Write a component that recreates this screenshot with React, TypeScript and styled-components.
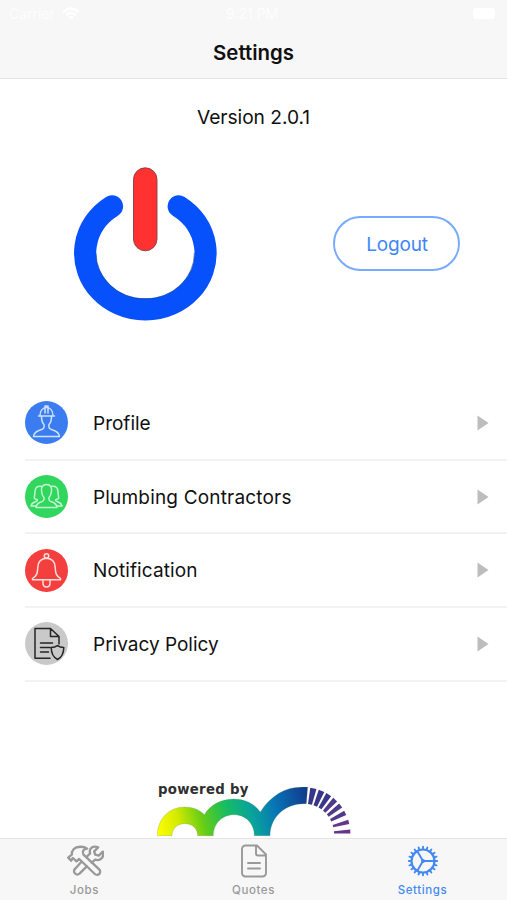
import React from "react";
import styled, { createGlobalStyle } from "styled-components";

const GlobalStyle = createGlobalStyle`
  * { box-sizing: border-box; }
  body { margin: 0; background: #fff; }
`;

const Screen = styled.div`
  width: 507px;
  height: 900px;
  display: flex;
  flex-direction: column;
  overflow: hidden;
  background: #fff;
  color: #101010;
  font-family: Inter, "Liberation Sans", sans-serif;
`;

const Header = styled.header`
  flex: none;
  height: 79px;
  background: #f7f7f7;
  border-bottom: 1px solid #e2e2e2;
`;

const StatusBar = styled.div`
  height: 27px;
  padding: 0 12px 0 9px;
  display: grid;
  grid-template-columns: 1fr auto 1fr;
  align-items: center;
  color: #fdfdfd;
  font-size: 14px;
`;

const Carrier = styled.span`
  display: flex;
  align-items: center;
  gap: 7px;
`;

const Battery = styled.span`
  justify-self: end;
  width: 22px;
  height: 11px;
  border-radius: 3px;
  background: #fff;
`;

const Title = styled.h1`
  margin: 0;
  height: 51px;
  text-align: center;
  font-size: 20.4px;
  line-height: 51px;
  font-weight: 600;
  letter-spacing: 0;
`;

const Content = styled.main`
  flex: 1;
  min-height: 0;
  overflow: hidden;
`;

const Version = styled.p`
  margin: 0;
  padding-top: 25px;
  text-align: center;
  font-size: 19.2px;
  line-height: 26px;
  letter-spacing: -0.05px;
`;

const Hero = styled.section`
  height: 257px;
  padding: 36px 47px 0 72px;
  display: flex;
  justify-content: space-between;
  align-items: flex-start;
`;

const LogoutButton = styled.button`
  width: 127px;
  height: 55px;
  margin-top: 50px;
  padding: 2px 0 0 1px;
  border: 2px solid #78abff;
  border-radius: 28px;
  background: #fff;
  color: #3e86f8;
  font: inherit;
  font-size: 19px;
  letter-spacing: -0.2px;
`;

const List = styled.ul`
  margin: 0;
  padding: 0 0 0 25px;
  list-style: none;
`;

const Row = styled.li`
  height: 73.7px;
  padding-right: 18px;
  display: flex;
  align-items: center;
  border-bottom: 2px solid #f2f2f2;
`;

const Badge = styled.svg<{ $color: string }>`
  width: 43px;
  height: 43px;
  flex: none;
  border-radius: 50%;
  background: ${(p) => p.$color};
  fill: none;
  stroke-width: 1.5;
  stroke-linecap: round;
  stroke-linejoin: round;
`;

const RowLabel = styled.span<{ $tracking: number }>`
  flex: 1;
  margin-left: 25px;
  padding-top: 1.5px;
  font-size: 19px;
  letter-spacing: ${(p) => p.$tracking}px;
`;

const Arrow = styled.svg`
  width: 12px;
  height: 16px;
  fill: #bdbdbd;
`;

const Brand = styled.footer`
  width: 195px;
  margin: 99px 0 0 157px;
`;

const BrandText = styled.div`
  height: 17px;
  padding-left: 1px;
  font: bold 13.3px/17px "DejaVu Sans", sans-serif;
  letter-spacing: 0.28px;
  color: #303030;
  white-space: nowrap;
`;

const Arches = styled.svg`
  display: block;
  width: 195px;
  height: 50px;
  margin-top: -11px;
`;

const TabBar = styled.nav`
  flex: none;
  height: 62px;
  display: grid;
  grid-template-columns: repeat(3, 1fr);
  background: #f7f7f7;
  border-top: 1px solid #e4e4e4;
`;

const Tab = styled.div<{ $active?: boolean }>`
  padding-top: 3px;
  display: flex;
  flex-direction: column;
  align-items: center;
  color: ${(p) => (p.$active ? "#4389f3" : "#999")};
  font-size: 11.5px;
  line-height: 20px;
  font-weight: 500;
  letter-spacing: 0.6px;
  svg {
    width: 38px;
    height: 38px;
    fill: none;
    stroke: currentColor;
    stroke-width: 1.9;
    stroke-linejoin: round;
    stroke-linecap: round;
  }
`;

const TEETH = Array.from({ length: 20 }, (_, i) => i * 18);
const FAN = [12, 22.5, 32.5, 42.5, 52.5, 63, 75, 87];

const ProfileBadge = () => (
  <Badge $color="#3b7df0" viewBox="0 0 43 43" stroke="#cfe2ff">
    <path d="M13.5 15h16M15 15c0-5 2.500-8.500 6.500-8.500S28 10 28 15M20 12V5h3v7M16.500 15.500c0 4 1 6.500 2.500 8 .8 3-.5 4.500-3 5.200-4.500 1.200-7 3-7.500 6.800h26c-.5-3.800-3-5.600-7.500-6.800-2.500-.7-3.800-2.200-3-5.200 1.500-1.500 2.500-4 2.500-8" />
  </Badge>
);

const GroupBadge = () => (
  <Badge $color="#30d65d" viewBox="0 0 43 43" stroke="#c4f8d0">
    <path d="M21.500 9.500c-4 0-5.500 3-5 6.500.2 3 1 5 2.500 6.500.5 2.500-.5 3.600-2.500 4.300-3.500 1-5 2.700-5.500 5.700h21c-.5-3-2-4.700-5.500-5.700-2-.7-3-1.800-2.500-4.300 1.500-1.500 2.300-3.500 2.500-6.500.5-3.500-1-6.500-5-6.500Z" />
    <path d="M17 11.500c-5.500-1-7 2-7 5.500 0 3-1.200 5.500-.5 6.500 1 .8 2.500.8 3 1.500.5 2-6 1.500-6.500 6h5M26 11.500c5.500-1 7 2 7 5.500 0 3 1.200 5.500.5 6.500-1 .8-2.500.8-3 1.500-.5 2 6 1.500 6.500 6h-5" />
  </Badge>
);

const BellBadge = () => (
  <Badge $color="#f43f3f" viewBox="0 0 43 43" stroke="#ffe0de">
    <circle cx="21.500" cy="7" r="2.200" />
    <path d="M21.500 9.200c-6 .3-8.500 4-8.700 9-.3 6.300-.8 8.300-5.300 11.300v1.300h28v-1.300c-4.500-3-5-5-5.300-11.300-.2-5-2.700-8.700-8.700-9ZM18 31v4c.5 4 6.500 4 7 0v-4" />
  </Badge>
);

const PrivacyBadge = () => (
  <Badge $color="#c9c9c9" viewBox="0 0 43 43" stroke="#252525">
    <path d="M25 36.300H10V6.500h15.500l8.500 8V22M25.500 6.500v8H34M15.500 21h12M15.500 25.500h9.500M15.500 30h8M32.500 23.500c2.200 1.800 4 2 6.300 2-.1 6-1.500 9.500-6.300 12-4.800-2.500-6.200-6-6.300-12 2.300 0 4.100-.2 6.300-2Z" />
  </Badge>
);

const rows = [
  { label: "Profile", tracking: 0, icon: <ProfileBadge /> },
  { label: "Plumbing Contractors", tracking: 0.18, icon: <GroupBadge /> },
  { label: "Notification", tracking: 0.1, icon: <BellBadge /> },
  { label: "Privacy Policy", tracking: 0, icon: <PrivacyBadge /> },
];

const PowerIcon = () => (
  <svg width="147" height="157" viewBox="72 166 147 157" fill="none">
    <path d="M112 206.300A60.200 56.300 0 1 0 178.700 206.300" stroke="#0651fc" strokeWidth="22.200" strokeLinecap="round" />
    <path d="M96 253a49.200 46 0 0 0 98.400 0" stroke="#174181" strokeWidth=".6" />
    <rect x="133.500" y="167.800" width="23.500" height="83" rx="11.700" fill="#ff3131" stroke="#873e3e" strokeWidth=".9" />
  </svg>
);

const BrandMark = () => (
  <Arches viewBox="51 50 585 150">
    <defs>
      <linearGradient id="spectrum" gradientUnits="userSpaceOnUse" x1="52" y1="190" x2="503" y2="80">
        <stop offset="0" stopColor="#ffff00" />
        <stop offset=".15" stopColor="#d4ea00" />
        <stop offset=".31" stopColor="#63cc18" />
        <stop offset=".47" stopColor="#16bd61" />
        <stop offset=".62" stopColor="#08a49b" />
        <stop offset=".78" stopColor="#0875b6" />
        <stop offset="1" stopColor="#103b8d" />
      </linearGradient>
    </defs>
    <path
      d="M52 196C52 145 88 110 134 110C160 110 179 119 193 133C211 103 244 86 282 86C317 86 343 101 361 125C391 76 437 50 487 50H503L499 100C438 98 391 137 390 196H343C343 159 316 133 282 133C247 133 220 159 220 196H173C173 174 156 160 135 160C113 160 96 174 96 196Z"
      fill="url(#spectrum)"
      stroke="#697d56"
      strokeOpacity=".45"
      strokeWidth="1.500"
    />
    {FAN.map((angle, i) => (
      <path
        key={angle}
        d={`M${-6 + i * 0.4} -91L${-9.5 + i * 0.5} -140H${9.5 - i * 0.5}L${6 - i * 0.4} -91Z`}
        fill={i < 3 ? "#383689" : i < 6 ? "#51398c" : "#68348c"}
        transform={`translate(491 191) rotate(${angle})`}
      />
    ))}
  </Arches>
);

const ToolsIcon = () => (
  <svg viewBox="46.500 21 114 114">
    <g strokeWidth="7">
      <path d="M99 59L146 103A9 9 0 0 1 133 117L86 72L78 79L67 69L62 77L53 68L64 59C62 48 72 36 84 36C94 34 103 36 110 41C98 43 94 49 99 59Z" />
      <path d="M108 66L119 55C114 40 127 31 143 37L131 49L134 59L145 62L157 50C162 67 149 79 134 74L124 83" />
      <path d="M93 80L74 101A9 9 0 0 0 87 116L109 94" />
    </g>
  </svg>
);

const QuoteIcon = () => (
  <svg viewBox="0 0 38 38">
    <path d="M22 3.500H10.500A3.500 3.500 0 0 0 7 7v24a3.500 3.500 0 0 0 3.500 3.500h17A3.500 3.500 0 0 0 31 31V12.500ZM21 4v7.500a2 2 0 0 0 2 2h8M13 21h12M13 26.500h12" />
  </svg>
);

const GearIcon = () => (
  <svg viewBox="0 0 38 38">
    <circle cx="19" cy="19" r="11.500" strokeWidth="2.200" />
    {TEETH.map((a) => (
      <path key={a} d="M19 6.500V4.800" transform={`rotate(${a} 19 19)`} />
    ))}
    <path d="M19 19h11M19 19l-5.700-9.800M19 19l-5.700 9.800" />
    <circle cx="19" cy="19" r="1" />
  </svg>
);

export default function App() {
  return (
    <Screen>
      <GlobalStyle />
      <Header>
        <StatusBar>
          <Carrier>
            Carrier
            <svg width="18" height="14" viewBox="0 0 18 14" fill="none" stroke="#fff" strokeWidth="2.500">
              <path d="M1 5q8-7 16 0M4 8q5-4 10 0M7 11q2-2 4 0" />
            </svg>
          </Carrier>
          <span>9:21 PM</span>
          <Battery />
        </StatusBar>
        <Title>Settings</Title>
      </Header>
      <Content>
        <Version>Version 2.0.1</Version>
        <Hero>
          <PowerIcon />
          <LogoutButton>Logout</LogoutButton>
        </Hero>
        <List>
          {rows.map((row) => (
            <Row key={row.label}>
              {row.icon}
              <RowLabel $tracking={row.tracking}>{row.label}</RowLabel>
              <Arrow viewBox="0 0 12 16">
                <path d="M.5.500 11.500 8 .5 15.500Z" />
              </Arrow>
            </Row>
          ))}
        </List>
        <Brand>
          <BrandText>powered by</BrandText>
          <BrandMark />
        </Brand>
      </Content>
      <TabBar>
        <Tab><ToolsIcon />Jobs</Tab>
        <Tab><QuoteIcon />Quotes</Tab>
        <Tab $active><GearIcon />Settings</Tab>
      </TabBar>
    </Screen>
  );
}
